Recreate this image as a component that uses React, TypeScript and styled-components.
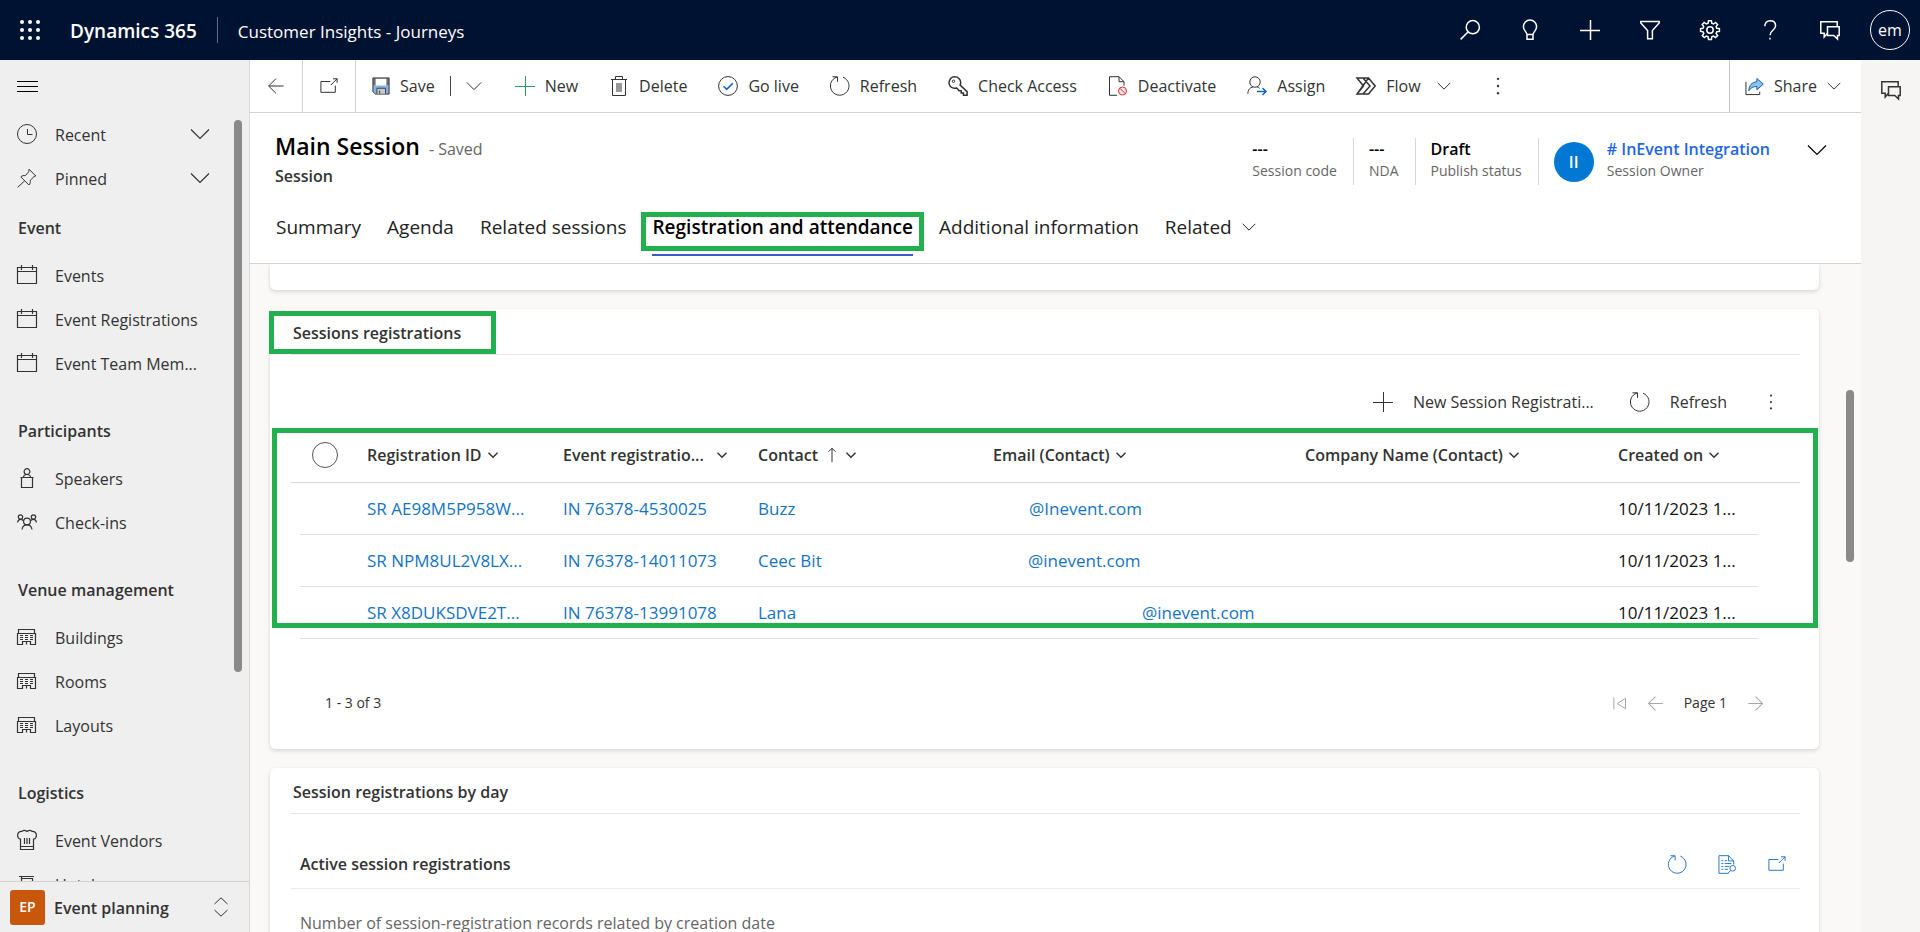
import React from "react";
import styled, { createGlobalStyle } from "styled-components";

const GlobalStyle = createGlobalStyle`
  *, *::before, *::after { box-sizing: border-box; }
  body {
    margin: 0;
    font-family: "Open Sans", "Noto Sans", sans-serif;
    font-size: 16px;
    line-height: 24px;
    color: #333;
    background: #faf9f8;
  }
  button {
    font: inherit;
    color: inherit;
    background: none;
    border: 0;
    padding: 0;
    margin: 0;
    cursor: pointer;
  }
  a { color: inherit; text-decoration: none; }
  h1, h2, h3, p, ul, dl, dd, dt { margin: 0; padding: 0; font: inherit; list-style: none; }
  svg { display: block; flex: none; }
`;

/* ---------- icons ---------- */

type IconName =
  | "waffle" | "search" | "bulb" | "plus" | "filter" | "gear" | "help" | "chat"
  | "menu" | "clock" | "pin" | "calendar" | "speaker" | "people" | "building" | "chef" | "hotel"
  | "back" | "forward" | "popout" | "save" | "trash" | "golive" | "refresh" | "key"
  | "deactivate" | "assign" | "flow" | "dots" | "share" | "first" | "up" | "report" | "updown"
  | "chevron";

const dots = [2, 10, 18];

const shapes: Record<IconName, React.ReactNode> = {
  waffle: (
    <g fill="currentColor" stroke="none">
      {dots.map((x) => dots.map((y) => <circle key={`${x}-${y}`} cx={x} cy={y} r="2" />))}
    </g>
  ),
  search: <path d="M.6 19.4 8 12M19.4 7.2a6.6 6.6 0 1 1-13.2 0 6.6 6.6 0 0 1 13.2 0Z" />,
  bulb: <path d="M7 14.6c0-2.4-3.6-4-3.6-7.9a6.6 6.6 0 0 1 13.2 0c0 3.900-3.600 5.500-3.600 7.900v4.700H7v-4.700h6" />,
  plus: <path d="M10.500 0v20M0 10.500h20" />,
  filter: <path d="M.8 1.500h18.400v1.500l-6.800 7.500v8.300H7.600v-8.300L.8 3Z" />,
  gear: (
    <>
      <path d="m8.500.7-.4 2.600-1.700.7-2.200-1.500-2 2L3.700 6.700 3 8.300.6 8.600v2.800l2.500.4.700 1.700-1.500 2.100 2 2 2.100-1.500 1.700.7.400 2.600h2.900l.4-2.600 1.700-.7 2.100 1.500 2-2-1.500-2.100.7-1.700 2.600-.4V8.600l-2.600-.3-.7-1.700 1.500-2.100-2-2L13.500 4l-1.700-.7-.4-2.600Z" />
      <circle cx="10" cy="10" r="3.200" />
    </>
  ),
  help: (
    <>
      <path d="M4.800 6.300C4.800 3 7 .8 10.200.8s5.400 2 5.400 5c0 4.400-5.600 4.600-5.600 9.400" />
      <path d="M10 17.800v1.800" />
    </>
  ),
  chat: (
    <>
      <path d="M7.500 13.200 4.200 17v-3.800H.8V1.800h16.400v4.900" />
      <path d="M7.500 6.800h11.700v8.700h-1.700V19l-3.700-3.500H7.500Z" />
    </>
  ),
  menu: <path d="M0 4.500h21M0 9.500h21M0 14.500h21" />,
  clock: <><circle cx="10" cy="10" r="9.500" /><path d="M10.500 5v5.500h5" /></>,
  pin: <path d="M12 1.200 18.800 8l-1.700.5-3.900 3.900c.4 1.700 0 3.300-1.300 4.600L3.800 8.900c1.200-1.200 2.900-1.600 4.500-1.200l3.500-4ZM7.600 12.900.6 19.400" />,
  calendar: <path d="M.5 2.500h19v16H.5ZM.5 6.500h19M4.500 0v5M15.500 0v5" />,
  speaker: <path d="M3.500 9.500h13M4.500 9.500v10h11v-10M10 .7a2.900 2.900 0 1 1 0 5.800 2.900 2.900 0 0 1 0-5.800ZM6.500 9.500c0-2 1.300-3 3.500-3s3.500 1 3.500 3" />,
  people: (
    <>
      <circle cx="3.500" cy="5" r="2.200" /><circle cx="16.500" cy="5" r="2.200" /><circle cx="10" cy="9.500" r="3.400" />
      <path d="M.6 10.500C.8 8.500 2 7.400 3.500 7.400c1 0 2 .4 2.700 1.200M19.400 10.500c-.2-2-1.400-3.100-2.900-3.100-1 0-2 .4-2.700 1.200M5 17.500c.4-2.800 2-4.600 5-4.600s4.600 1.800 5 4.600" />
    </>
  ),
  building: (
    <>
      <path d="M.5 6.500h18v11h-5v-3h-8v3h-5ZM1.500 6.500v-4h16v4M9.500 14.500v3" />
      <path d="M3 8.500h3M8 8.500h3M13 8.500h3M3 10.500h3M8 10.500h3M13 10.500h3M3 12.500h3M8 12.500h3M13 12.500h3" />
    </>
  ),
  chef: (
    <path d="M3.500 19.500V9.200C1.600 8.800.6 7.500.6 5.500.6 2.800 2.600 1 5 1.400 6.200.2 8.400.2 10 1.400c1.600-1.200 3.800-1.200 5 0 2.400-.4 4.400 1.400 4.400 4.100 0 2-1 3.300-2.900 3.700v10.300ZM3.500 16.500h13M7.500 8v6M10 8v6M12.500 8v6" />
  ),
  hotel: <path d="M4.500 20V2M4.500 4.500h11V14M2 2.500h15M9.500 7.500h5V13h-5Z" />,
  back: <path d="M18.500 10H1.800M10 1.800 1.800 10l8.200 8.200" />,
  forward: <path d="M1.500 10h16.700M10 1.800 18.200 10 10 18.200" />,
  popout: <path d="M11.500 5H1v12h16v-7.500M12 9l7-7M14.500 2H19v4.500" />,
  save: (
    <>
      <path d="M1 1h18v18H3.500L1 16.500Z" fill="#6d6d6d" stroke="#444" />
      <path d="M1.800 9h16.400v9.200H1.800Z" fill="#83b4e3" stroke="none" />
      <path d="M4 2h12v7.500H4Z" fill="#fff" stroke="none" />
      <path d="M5.500 18.500v-6h9.500v6" fill="#c9c9c9" stroke="#444" />
      <path d="M8.500 15v3.500" stroke="#444" />
    </>
  ),
  trash: <path d="M2 3.500h16M6.500 3.500v-3h7v3M3.500 3.500v16h13v-16M8 7v9M10 7v9M12 7v9" />,
  golive: <><circle cx="10" cy="10" r="9.400" /><path d="m5.500 10.200 3.200 3.200 6-6" stroke="#1264c8" strokeWidth="1.500" /></>,
  refresh: <path d="M13 1.200a9.300 9.300 0 1 1-6-.2M2.500.8h5v5" />,
  key: (
    <>
      <path d="M1 6.800C1 3.300 3.500.8 6.800.8s5.900 2.500 5.900 5.800c0 .9-.2 1.700-.6 2.400l7 6.600v3.700h-3.600v-2.300h-2.300v-2.300h-2.100L8.500 12c-.5.2-1 .3-1.700.3C3.500 12.300 1 9.900 1 6.800Z" strokeWidth="1.500" />
      <circle cx="5.500" cy="5.300" r="1.200" />
    </>
  ),
  deactivate: (
    <>
      <path d="M9 19.300H1.500V.7h9.500l5 5v4M11 .7v5h5" />
      <circle cx="14.500" cy="15" r="4" stroke="#d13438" fill="#fbe3e4" />
      <path d="m11.800 12.200 5.500 5.500" stroke="#d13438" />
    </>
  ),
  assign: (
    <>
      <circle cx="8" cy="6" r="5.200" />
      <path d="M.8 17.800c0-3.600 2-6.300 5.200-6.900M10 10.900c1 .2 1.900.7 2.600 1.400" />
      <path d="M10 15.500h9M15.500 12l3.500 3.500-3.500 3.500" stroke="#1264c8" strokeWidth="1.500" />
    </>
  ),
  flow: <path d="M1 2h11.500l6.700 8-6.700 8H1l6.500-8ZM7 2l7 8-7 8M1 18 12.500 2" strokeWidth="1.500" />,
  dots: <g fill="currentColor" stroke="none"><circle cx="10" cy="2" r="1.300" /><circle cx="10" cy="10" r="1.300" /><circle cx="10" cy="18" r="1.300" /></g>,
  share: (
    <>
      <path d="M1 5v13.500h14.500v-3" />
      <path d="M12.500 1.500 19.200 7.500l-6.700 6V10c-4 0-6.500 1.200-8.500 4.500.3-5.500 3-9 8.500-9.500Z" fill="#8cc4f0" stroke="#1b5fa8" />
    </>
  ),
  first: <path d="M2.500 2v16M18 3v14L7 10Z" />,
  up: <path d="M10 19V1.500M5.500 6 10 1.500 14.500 6" />,
  report: (
    <>
      <path d="M11 19.300H1V.7h10l5.500 5.500V10M11 .7v5.500h5.500M3.500 6h2M7 6h2.500M3.500 9h2M7 9h7M3.500 12h2M7 12h5M3.500 15h2M7 15h3.500" />
      <circle cx="15.500" cy="14" r="3" /><path d="m13.400 16.200-3.400 3.400" />
    </>
  ),
  updown: <path d="M3.500 7 10 .8 16.500 7M3.500 13l6.500 6.200 6.500-6.200" />,
  chevron: <path d="m1 5.500 9 9 9-9" />,
};

function Icon({ name, size = 20, weight = 1 }: { name: IconName; size?: number; weight?: number }) {
  return (
    <svg width={size} height={size} viewBox="0 0 20 20" fill="none" stroke="currentColor"
      strokeWidth={(weight * 20) / size} aria-hidden="true" overflow="visible">
      {shapes[name]}
    </svg>
  );
}

/* ---------- top bar ---------- */

const TopBar = styled.header`
  display: flex;
  align-items: center;
  height: 60px;
  flex: none;
  color: #fff;
  background: #001231;
`;
const IconButton = styled.button`
  display: flex;
  align-items: center;
  justify-content: center;
  width: 60px;
  height: 100%;
  flex: none;
`;
const Brand = styled.a`
  padding: 2px 20px 0 10px;
  font-size: 19px;
  font-weight: 600;
`;
const AppName = styled.a`
  padding: 4px 0 0 20px;
  font-size: 17px;
`;
const BrandRule = styled.span`
  width: 1px;
  height: 26px;
  background: #5d6a83;
`;
const Spacer = styled.div`
  flex: 1;
`;
const Persona = styled.span`
  display: grid;
  place-items: center;
  width: 40px;
  height: 40px;
  border: 1px solid #fff;
  border-radius: 50%;
`;

/* ---------- shell ---------- */

const Shell = styled.div`
  display: flex;
  flex-direction: column;
  height: 100vh;
  overflow: hidden;
`;
const Body = styled.div`
  display: flex;
  flex: 1;
  min-height: 0;
`;
const ScrollThumb = styled.div<{ $top: number; $height: number }>`
  position: absolute;
  top: ${(p) => p.$top}px;
  right: 7px;
  width: 8px;
  height: ${(p) => p.$height}px;
  border-radius: 4px;
  background: #8a8a8a;
`;

/* ---------- site map ---------- */

const Sidebar = styled.nav`
  position: relative;
  display: flex;
  flex-direction: column;
  width: 250px;
  flex: none;
  background: #efefef;
  border-right: 1px solid #d8d8d8;
`;
const MenuButton = styled.button`
  display: flex;
  align-items: center;
  height: 53px;
  padding: 0 17px;
  flex: none;
  color: #000;
`;
const NavScroll = styled.div`
  flex: 1;
  min-height: 0;
  overflow: hidden;
`;
const NavItem = styled.a`
  display: flex;
  align-items: center;
  gap: 18px;
  height: 44px;
  padding: 0 39px 2px 17px;
  white-space: nowrap;
`;
const NavLabel = styled.span`
  flex: 1;
  padding-top: 2px;
`;
const NavHeading = styled.h2<{ $first?: boolean }>`
  height: ${(p) => (p.$first ? 53 : 71)}px;
  padding: ${(p) => (p.$first ? 15 : 33)}px 18px 0;
  font-weight: 600;
`;
const AreaSwitcher = styled.button`
  display: flex;
  align-items: center;
  gap: 9px;
  height: 51px;
  padding: 0 18px 0 10px;
  flex: none;
  border-top: 1px solid #d2d2d2;
  font-weight: 600;
  text-align: left;
`;
const AreaBadge = styled.span`
  display: grid;
  place-items: center;
  width: 35px;
  height: 35px;
  border-radius: 3px;
  font-size: 14px;
  color: #fff;
  background: #c8560b;
`;
const AreaName = styled.span`
  flex: 1;
  padding-top: 2px;
`;

/* ---------- form area ---------- */

const Main = styled.main`
  display: flex;
  flex-direction: column;
  flex: 1;
  min-width: 0;
`;
const CommandBar = styled.div`
  display: flex;
  align-items: stretch;
  height: 53px;
  flex: none;
  border-bottom: 1px solid #d2d2d2;
  background: #fff;
`;
const BarButton = styled.button`
  width: 53px;
  flex: none;
  display: grid;
  place-items: center;
  border-right: 1px solid #d2d2d2;
`;
const Commands = styled.div`
  display: flex;
  align-items: center;
  gap: 31px;
  padding-left: 16px;
  flex: 1;
  white-space: nowrap;
`;
const Command = styled.button`
  display: flex;
  align-items: center;
  gap: 10px;
`;
const FlowCommand = styled(Command)`
  padding-right: 7px;
`;
const FlowLabel = styled.span`
  padding-right: 6px;
`;
const SplitCommand = styled.div`
  display: flex;
  align-items: center;
  gap: 15px;
  padding-right: 2px;
`;
const SplitRule = styled.span`
  width: 1px;
  height: 20px;
  background: #444;
`;
const Tint = styled.span<{ $color: string }>`
  color: ${(p) => p.$color};
`;
const ShareButton = styled.button`
  display: flex;
  align-items: center;
  gap: 10px;
  width: 132px;
  padding-left: 15px;
  border-left: 1px solid #c6c6c6;
`;

const FormHeader = styled.header`
  flex: none;
  background: #fff;
  border-bottom: 1px solid #d2d2d2;
`;
const TitleRow = styled.div`
  display: flex;
  justify-content: space-between;
  height: 91px;
  padding: 17px 34px 0 25px;
`;
const Title = styled.h1`
  display: flex;
  align-items: baseline;
  gap: 9px;
  line-height: 32px;
  font-size: 23px;
  font-weight: 600;
  color: #000;
`;
const Saved = styled.span`
  font-size: 16px;
  font-weight: 400;
  color: #666;
`;
const Entity = styled.p`
  font-weight: 600;
  line-height: 22px;
`;
const Fields = styled.dl`
  display: flex;
  align-items: flex-start;
  padding-top: 8px;
`;
const Field = styled.div`
  display: flex;
  flex-direction: column-reverse;
  height: 47px;
  padding: 0 16px 0 15px;
  border-right: 1px solid #d8d8d8;
`;
const FieldLabel = styled.dt`
  font-size: 14px;
  line-height: 20px;
  padding-bottom: 4px;
  color: #666;
`;
const FieldValue = styled.dd`
  font-weight: 600;
  line-height: 23px;
  color: #000;
`;
const OwnerField = styled.div`
  display: flex;
  align-items: center;
  gap: 13px;
  height: 47px;
  padding-left: 15px;
`;
const OwnerText = styled.div`
  display: flex;
  flex-direction: column-reverse;
`;
const OwnerLink = styled.a`
  color: #2266e3;
`;
const Coin = styled.span`
  display: grid;
  place-items: center;
  width: 40px;
  height: 40px;
  border-radius: 50%;
  font-weight: 600;
  color: #fff;
  background: #0078d4;
`;
const ExpandButton = styled.button`
  align-self: flex-start;
  margin: 2px 0 0 37px;
  color: #000;
`;

const Tabs = styled.div`
  display: flex;
  height: 59px;
  padding: 8px 26px 0;
  gap: 26px;
  font-size: 19px;
  white-space: nowrap;
`;
const Tab = styled.button<{ $active?: boolean }>`
  position: relative;
  display: flex;
  align-items: center;
  gap: 10px;
  height: 44px;
  padding-bottom: 12px;
  border-bottom: 2px solid ${(p) => (p.$active ? "#3b5bcc" : "transparent")};
  font-weight: ${(p) => (p.$active ? 600 : 400)};
  color: ${(p) => (p.$active ? "#000" : "#222")};
`;

/* outlines drawn over the parts being pointed out */
const Outline = styled.span<{ $inset: string }>`
  position: absolute;
  inset: ${(p) => p.$inset};
  border: 5px solid #22b04f;
  pointer-events: none;
`;

const FormBody = styled.div`
  position: relative;
  display: flex;
  flex-direction: column;
  gap: 19px;
  flex: 1;
  min-height: 0;
  overflow: hidden;
  padding: 0 42px 0 20px;
  background: #faf9f8;
`;
const Card = styled.section<{ $cut?: boolean }>`
  flex: none;
  padding: 0 19px ${(p) => (p.$cut ? 26 : 30)}px 21px;
  border-radius: ${(p) => (p.$cut ? "0 0 5px 5px" : "5px")};
  background: #fff;
  box-shadow: 0 2px 4px rgba(0, 0, 0, 0.13), 0 0 1px rgba(0, 0, 0, 0.1);
`;
const CardTitle = styled.h2`
  position: relative;
  height: 46px;
  padding: 12px 2px 0;
  border-bottom: 1px solid #e6e6e6;
  font-weight: 600;
`;
const TitleOutline = styled(Outline)`
  width: 227px;
`;
const GridTools = styled.div`
  display: flex;
  align-items: center;
  justify-content: flex-end;
  gap: 36px;
  height: 73px;
  padding: 20px 21px 0 0;
`;
const GridCommand = styled.button`
  display: flex;
  align-items: center;
  gap: 20px;
`;

const GridWrap = styled.div`
  position: relative;
`;
const Table = styled.table`
  width: 100%;
  table-layout: fixed;
  border-spacing: 0;
  border-top: 1px solid #dcdcdc;
`;
const Th = styled.th`
  height: 54px;
  padding: 0 15px 2px 16px;
  border-bottom: 1px solid #d8d8d8;
  text-align: left;
  font-weight: 600;
  white-space: nowrap;
`;
const SortButton = styled.button<{ $full?: boolean }>`
  display: flex;
  align-items: center;
  justify-content: space-between;
  gap: 6px;
  width: ${(p) => (p.$full ? "100%" : "auto")};
  font-weight: 600;
`;
const Td = styled.td<{ $bare?: boolean; $indent?: number }>`
  height: 52px;
  padding: 0 18px 0 ${(p) => p.$indent ?? 16}px;
  border-bottom: ${(p) => (p.$bare ? "0" : "1px solid #e1e1e1")};
  overflow: hidden;
  white-space: nowrap;
  font-size: 17px;
  color: #111;
`;
const CellLink = styled.a`
  color: #1474c4;
`;
const SelectAll = styled.input`
  appearance: none;
  display: block;
  width: 26px;
  height: 26px;
  margin: 0 0 0 -4px;
  border: 1px solid #555;
  border-radius: 50%;
`;
const Pager = styled.footer`
  display: flex;
  align-items: center;
  gap: 20px;
  height: 80px;
  padding: 48px 36px 0 34px;
  font-size: 14px;
`;
const RowCount = styled.span`
  flex: 1;
`;
const PageButton = styled.button`
  color: #a6a6a6;
`;

const ChartHeader = styled.div`
  display: flex;
  align-items: center;
  gap: 31px;
  height: 75px;
  padding: 26px 14px 0 9px;
  border-bottom: 1px solid #ebebeb;
`;
const ChartTitle = styled.h3`
  flex: 1;
  font-weight: 600;
`;
const ChartButton = styled.button`
  color: #2b79c9;
`;
const ChartNote = styled.p`
  padding: 22px 9px 0;
  color: #666;
`;

const Rail = styled.aside`
  width: 59px;
  flex: none;
  padding-top: 20px;
  display: flex;
  justify-content: center;
  align-items: flex-start;
  background: #f6f5f4;
`;

/* ---------- data ---------- */

const sections: { title: string; items: [IconName, string][] }[] = [
  { title: "Event", items: [["calendar", "Events"], ["calendar", "Event Registrations"], ["calendar", "Event Team Mem..."]] },
  { title: "Participants", items: [["speaker", "Speakers"], ["people", "Check-ins"]] },
  { title: "Venue management", items: [["building", "Buildings"], ["building", "Rooms"], ["building", "Layouts"]] },
  { title: "Logistics", items: [["chef", "Event Vendors"], ["hotel", "Hotels"]] },
];

const topIcons: [IconName, string][] = [
  ["search", "Search"], ["bulb", "Ideas"], ["plus", "Quick create"], ["filter", "Advanced find"],
  ["gear", "Settings"], ["help", "Help"], ["chat", "Assistant"],
];

const commands: [IconName, string][] = [
  ["trash", "Delete"], ["golive", "Go live"], ["refresh", "Refresh"], ["key", "Check Access"],
  ["deactivate", "Deactivate"], ["assign", "Assign"],
];

const columns = [9, 51, 196, 195, 235, 312, 313, 156, 42];

const rows = [
  { id: "SR AE98M5P958W...", event: "IN 76378-4530025", contact: "Buzz", email: "@Inevent.com", indent: 52 },
  { id: "SR NPM8UL2V8LX...", event: "IN 76378-14011073", contact: "Ceec Bit", email: "@inevent.com", indent: 51 },
  { id: "SR X8DUKSDVE2T...", event: "IN 76378-13991078", contact: "Lana", email: "@inevent.com", indent: 165 },
];

/* ---------- page ---------- */

function SiteMap() {
  return (
    <Sidebar aria-label="Site map">
      <MenuButton aria-label="Collapse menu"><Icon name="menu" /></MenuButton>
      <NavScroll>
        {(["clock", "pin"] as IconName[]).map((icon) => (
          <NavItem href="#" key={icon}>
            <Icon name={icon} />
            <NavLabel>{icon === "clock" ? "Recent" : "Pinned"}</NavLabel>
            <Icon name="chevron" weight={1.2} />
          </NavItem>
        ))}
        {sections.map((section, i) => (
          <section key={section.title}>
            <NavHeading $first={i === 0}>{section.title}</NavHeading>
            {section.items.map(([icon, label]) => (
              <NavItem href="#" key={label}>
                <Icon name={icon} weight={1.2} />
                <NavLabel>{label}</NavLabel>
              </NavItem>
            ))}
          </section>
        ))}
      </NavScroll>
      <AreaSwitcher>
        <AreaBadge>EP</AreaBadge>
        <AreaName>Event planning</AreaName>
        <Icon name="updown" />
      </AreaSwitcher>
      <ScrollThumb $top={60} $height={552} />
    </Sidebar>
  );
}

function HeaderCell({ label, full, sorted }: { label: string; full?: boolean; sorted?: boolean }) {
  return (
    <Th>
      <SortButton $full={full}>
        {label}
        {sorted && <Icon name="up" size={16} />}
        <Icon name="chevron" size={10} weight={1.5} />
      </SortButton>
    </Th>
  );
}

export default function App() {
  return (
    <Shell>
      <GlobalStyle />
      <TopBar>
        <IconButton aria-label="App launcher"><Icon name="waffle" /></IconButton>
        <Brand href="#">Dynamics 365</Brand>
        <BrandRule />
        <AppName href="#">Customer Insights - Journeys</AppName>
        <Spacer />
        {topIcons.map(([icon, label]) => (
          <IconButton key={icon} aria-label={label}><Icon name={icon} weight={1.5} /></IconButton>
        ))}
        <IconButton aria-label="Account"><Persona>em</Persona></IconButton>
      </TopBar>
      <Body>
        <SiteMap />
        <Main>
          <CommandBar>
            <BarButton aria-label="Back"><Icon name="back" size={18} /></BarButton>
            <BarButton aria-label="Open in new window"><Icon name="popout" size={18} /></BarButton>
            <Commands>
              <SplitCommand>
                <Command><Icon name="save" size={18} />Save</Command>
                <SplitRule />
                <button aria-label="More save options"><Icon name="chevron" size={16} /></button>
              </SplitCommand>
              <Command><Tint $color="#2a9d5c"><Icon name="plus" /></Tint>New</Command>
              {commands.map(([icon, label]) => (
                <Command key={label}><Icon name={icon} />{label}</Command>
              ))}
              <FlowCommand><Icon name="flow" /><FlowLabel>Flow</FlowLabel><Icon name="chevron" size={14} /></FlowCommand>
              <button aria-label="More commands"><Icon name="dots" size={18} /></button>
            </Commands>
            <ShareButton><Icon name="share" size={19} />Share<Icon name="chevron" size={14} /></ShareButton>
          </CommandBar>

          <FormHeader>
            <TitleRow>
              <div>
                <Title>Main Session<Saved>- Saved</Saved></Title>
                <Entity>Session</Entity>
              </div>
              <Fields>
                <Field><FieldLabel>Session code</FieldLabel><FieldValue>---</FieldValue></Field>
                <Field><FieldLabel>NDA</FieldLabel><FieldValue>---</FieldValue></Field>
                <Field><FieldLabel>Publish status</FieldLabel><FieldValue>Draft</FieldValue></Field>
                <OwnerField>
                  <Coin>II</Coin>
                  <OwnerText>
                    <FieldLabel>Session Owner</FieldLabel>
                    <FieldValue><OwnerLink href="#"># InEvent Integration</OwnerLink></FieldValue>
                  </OwnerText>
                </OwnerField>
                <ExpandButton aria-label="Expand header"><Icon name="chevron" weight={1.2} /></ExpandButton>
              </Fields>
            </TitleRow>
            <Tabs role="tablist">
              <Tab role="tab">Summary</Tab>
              <Tab role="tab">Agenda</Tab>
              <Tab role="tab">Related sessions</Tab>
              <Tab role="tab" aria-selected="true" $active>
                Registration and attendance
                <Outline $inset="0 -11px 3px" />
              </Tab>
              <Tab role="tab">Additional information</Tab>
              <Tab role="tab">Related<Icon name="chevron" size={14} /></Tab>
            </Tabs>
          </FormHeader>

          <FormBody>
            <Card $cut />
            <Card>
              <CardTitle>
                Sessions registrations
                <TitleOutline $inset="2px auto 0 -22px" />
              </CardTitle>
              <GridTools>
                <GridCommand><Icon name="plus" />New Session Registrati...</GridCommand>
                <GridCommand><Icon name="refresh" />Refresh</GridCommand>
                <button aria-label="More grid commands"><Icon name="dots" size={16} /></button>
              </GridTools>
              <GridWrap>
                <Table>
                  <colgroup>{columns.map((w, i) => <col key={i} width={w} />)}</colgroup>
                  <thead>
                    <tr>
                      <Th as="td" />
                      <Th><SelectAll type="checkbox" aria-label="Select all rows" /></Th>
                      <HeaderCell label="Registration ID" />
                      <HeaderCell label="Event registratio..." full />
                      <HeaderCell label="Contact" sorted />
                      <HeaderCell label="Email (Contact)" />
                      <HeaderCell label="Company Name (Contact)" />
                      <HeaderCell label="Created on" />
                      <Th as="td" />
                    </tr>
                  </thead>
                  <tbody>
                    {rows.map((row) => (
                      <tr key={row.id}>
                        <Td $bare />
                        <Td />
                        <Td><CellLink href="#">{row.id}</CellLink></Td>
                        <Td><CellLink href="#">{row.event}</CellLink></Td>
                        <Td><CellLink href="#">{row.contact}</CellLink></Td>
                        <Td $indent={row.indent}><CellLink href="#">{row.email}</CellLink></Td>
                        <Td />
                        <Td>10/11/2023 1...</Td>
                        <Td $bare />
                      </tr>
                    ))}
                  </tbody>
                </Table>
                <Outline $inset="0 -18px 11px -19px" />
              </GridWrap>
              <Pager>
                <RowCount>1 - 3 of 3</RowCount>
                <PageButton aria-label="First page"><Icon name="first" size={15} /></PageButton>
                <PageButton aria-label="Previous page"><Icon name="back" size={17} /></PageButton>
                Page 1
                <PageButton aria-label="Next page"><Icon name="forward" size={17} /></PageButton>
              </Pager>
            </Card>
            <Card>
              <CardTitle>Session registrations by day</CardTitle>
              <ChartHeader>
                <ChartTitle>Active session registrations</ChartTitle>
                <ChartButton aria-label="Refresh chart"><Icon name="refresh" size={19} /></ChartButton>
                <ChartButton aria-label="View records"><Icon name="report" size={19} /></ChartButton>
                <ChartButton aria-label="Expand chart"><Icon name="popout" size={18} /></ChartButton>
              </ChartHeader>
              <ChartNote>Number of session-registration records related by creation date</ChartNote>
            </Card>
            <ScrollThumb $top={126} $height={172} />
          </FormBody>
        </Main>
        <Rail><button aria-label="Open assistant"><Icon name="chat" weight={1.5} /></button></Rail>
      </Body>
    </Shell>
  );
}
